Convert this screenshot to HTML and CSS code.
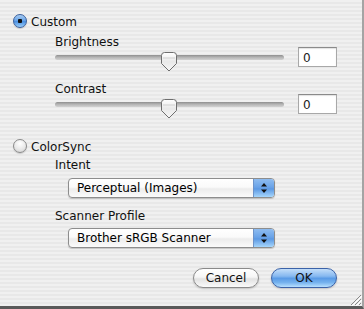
FILE: index.html
```html
<!DOCTYPE html>
<html lang="en">
<head>
  <meta charset="UTF-8" />
  <title>Scanner Settings</title>
  <link rel="stylesheet" href="styles.css">
</head>
<body>
  <div class="dialog">
    <div class="radio-row">
      <span class="radio on"></span>
      <span class="radio-label">Custom</span>
    </div>

    <div class="group sliders">
      <div class="label first">Brightness</div>
      <div class="slider-row">
        <div class="track">
          <svg class="thumb" width="18" height="20" viewBox="0 0 18 20">
            <defs>
              <linearGradient id="tg1" x1="0" y1="0" x2="0" y2="1">
                <stop offset="0" stop-color="#ffffff"/>
                <stop offset="0.5" stop-color="#e9e9e9"/>
                <stop offset="1" stop-color="#f7f7f7"/>
              </linearGradient>
            </defs>
            <path d="M1.5 3.5 Q1.5 0.5 4.5 0.5 H13.5 Q16.5 0.5 16.5 3.5 V11.5 L9 19 L1.5 11.5 Z" fill="url(#tg1)" stroke="#6e6e6e"/>
            <path d="M3 6 H15" stroke="#d0d0d0"/>
          </svg>
        </div>
        <div class="field">0</div>
      </div>

      <div class="label">Contrast</div>
      <div class="slider-row">
        <div class="track">
          <svg class="thumb" width="18" height="20" viewBox="0 0 18 20">
            <path d="M1.5 3.5 Q1.5 0.5 4.5 0.5 H13.5 Q16.5 0.5 16.5 3.5 V11.5 L9 19 L1.5 11.5 Z" fill="url(#tg1)" stroke="#6e6e6e"/>
            <path d="M3 6 H15" stroke="#d0d0d0"/>
          </svg>
        </div>
        <div class="field">0</div>
      </div>
    </div>

    <div class="radio-row second">
      <span class="radio"></span>
      <span class="radio-label">ColorSync</span>
    </div>

    <div class="group popups">
      <div class="label first">Intent</div>
      <div class="popup">
        <span class="popup-text">Perceptual (Images)</span>
        <span class="popup-arrows">
          <svg width="8" height="12" viewBox="0 0 8 12">
            <path d="M4 1 L7 4.5 H1 Z M1 7.5 H7 L4 11 Z" fill="#111"/>
          </svg>
        </span>
      </div>

      <div class="label">Scanner Profile</div>
      <div class="popup">
        <span class="popup-text">Brother sRGB Scanner</span>
        <span class="popup-arrows">
          <svg width="8" height="12" viewBox="0 0 8 12">
            <path d="M4 1 L7 4.5 H1 Z M1 7.5 H7 L4 11 Z" fill="#111"/>
          </svg>
        </span>
      </div>
    </div>

    <div class="buttons">
      <button class="btn">Cancel</button>
      <button class="btn default">OK</button>
    </div>

    <svg class="grip" width="14" height="14" viewBox="0 0 14 14">
      <path d="M13 3 L3 13 M13 7 L7 13 M13 11 L11 13" stroke="#8a8a8a" stroke-width="1"/>
      <path d="M14 4 L4 14 M14 8 L8 14" stroke="#ffffff" stroke-width="1"/>
    </svg>
  </div>
</body>
</html>
```

FILE: styles.css
```css
* {
  margin: 0;
  padding: 0;
  box-sizing: border-box;
}

body {
  font-family: 'DejaVu Sans', 'Liberation Sans', sans-serif;
  font-size: 12px;
  color: #111;
  background: #ececec;
}

.dialog {
  position: relative;
  width: 364px;
  height: 309px;
  overflow: hidden;
  padding: 14px 25px 0 13px;
  background: repeating-linear-gradient(#f0f0f0 0 2px, #e8e8e8 2px 4px);
  border-right: 2px solid #a4a4a4;
  border-bottom: 3px solid #5a5a5a;
}

/* radio rows */

.radio-row {
  display: flex;
  align-items: flex-start;
  gap: 4px;
  height: 16px;
}

.radio-row.second {
  margin-top: 25px;
}

.radio {
  width: 14px;
  height: 14px;
  border-radius: 50%;
  border: 1px solid #8a8a8a;
  background: radial-gradient(circle at 50% 30%, #ffffff 0, #e8e8e8 55%, #cfcfcf 100%);
  box-shadow: 0 1px 1px rgba(0, 0, 0, 0.15);
}

.radio.on {
  border-color: #3a5f9c;
  background: radial-gradient(circle at 50% 50%, #111 0, #111 2px, transparent 2.5px),
              linear-gradient(#a9cdf3 0%, #6aa5e8 45%, #4b8fe0 55%, #9cd0fb 100%);
}

.radio-label {
  line-height: 14px;
  margin-top: 1px;
  color: #111;
}

/* labels */

.group {
  padding-left: 42px;
}

.label {
  line-height: 14px;
  height: 14px;
  margin-top: 15px;
}

.label.first {
  margin-top: 5px;
}

.popups .label {
  margin-top: 11px;
}

.popups .label.first {
  margin-top: 3px;
}

/* sliders */

.slider-row {
  display: flex;
  align-items: flex-start;
  gap: 14px;
  margin-top: -2px;
}

.track {
  position: relative;
  width: 229px;
  height: 5px;
  margin-top: 8px;
  border-radius: 3px;
  background: linear-gradient(#8e8e8e, #b4b4b4 45%, #d2d2d2);
}

.thumb {
  position: absolute;
  left: 105px;
  top: -3px;
}

.field {
  width: 39px;
  height: 20px;
  padding: 3px 0 0 4px;
  line-height: 14px;
  background: #fff;
  border: 1px solid #a8a8a8;
  border-top-color: #8a8a8a;
  box-shadow: inset 0 1px 1px rgba(0, 0, 0, 0.12);
  color: #222;
}

/* popups */

.popup {
  display: flex;
  width: 207px;
  height: 20px;
  margin: 6px 0 0 13px;
  border: 1px solid #8d8d8d;
  border-radius: 4px;
  overflow: hidden;
  background: linear-gradient(#ffffff 0%, #fafafa 45%, #ececec 55%, #fbfbfb 100%);
  box-shadow: 0 1px 1px rgba(0, 0, 0, 0.18);
}

.popup.second {
  margin-top: 5px;
}

.popup-text {
  flex: 1;
  padding-left: 8px;
  line-height: 18px;
  color: #000;
}

.popup-arrows {
  display: flex;
  align-items: center;
  justify-content: center;
  width: 21px;
  border-left: 1px solid #6d93c9;
  background: linear-gradient(#8ebcf0 0%, #6aa3e8 45%, #5b98e3 55%, #a6d6fc 100%);
}

.label + .popup {
  margin-top: 6px;
}

.popups .popup:last-child {
  margin-top: 5px;
}

/* buttons */

.buttons {
  display: flex;
  justify-content: flex-end;
  gap: 12px;
  margin-top: 20px;
}

.btn {
  width: 66px;
  height: 20px;
  border-radius: 10px;
  border: 1px solid #8a8a8a;
  font-family: inherit;
  font-size: 12px;
  line-height: 18px;
  color: #111;
  background: linear-gradient(#ffffff 0%, #f6f6f6 45%, #e2e2e2 55%, #fafafa 100%);
  box-shadow: 0 1px 2px rgba(0, 0, 0, 0.2);
}

.btn.default {
  border-color: #3b62a8;
  background: linear-gradient(#c3def9 0%, #86b8f0 40%, #5a9be6 52%, #75b2ee 75%, #b8e0ff 100%);
}

.grip {
  position: absolute;
  right: 0;
  bottom: 0;
}
```
